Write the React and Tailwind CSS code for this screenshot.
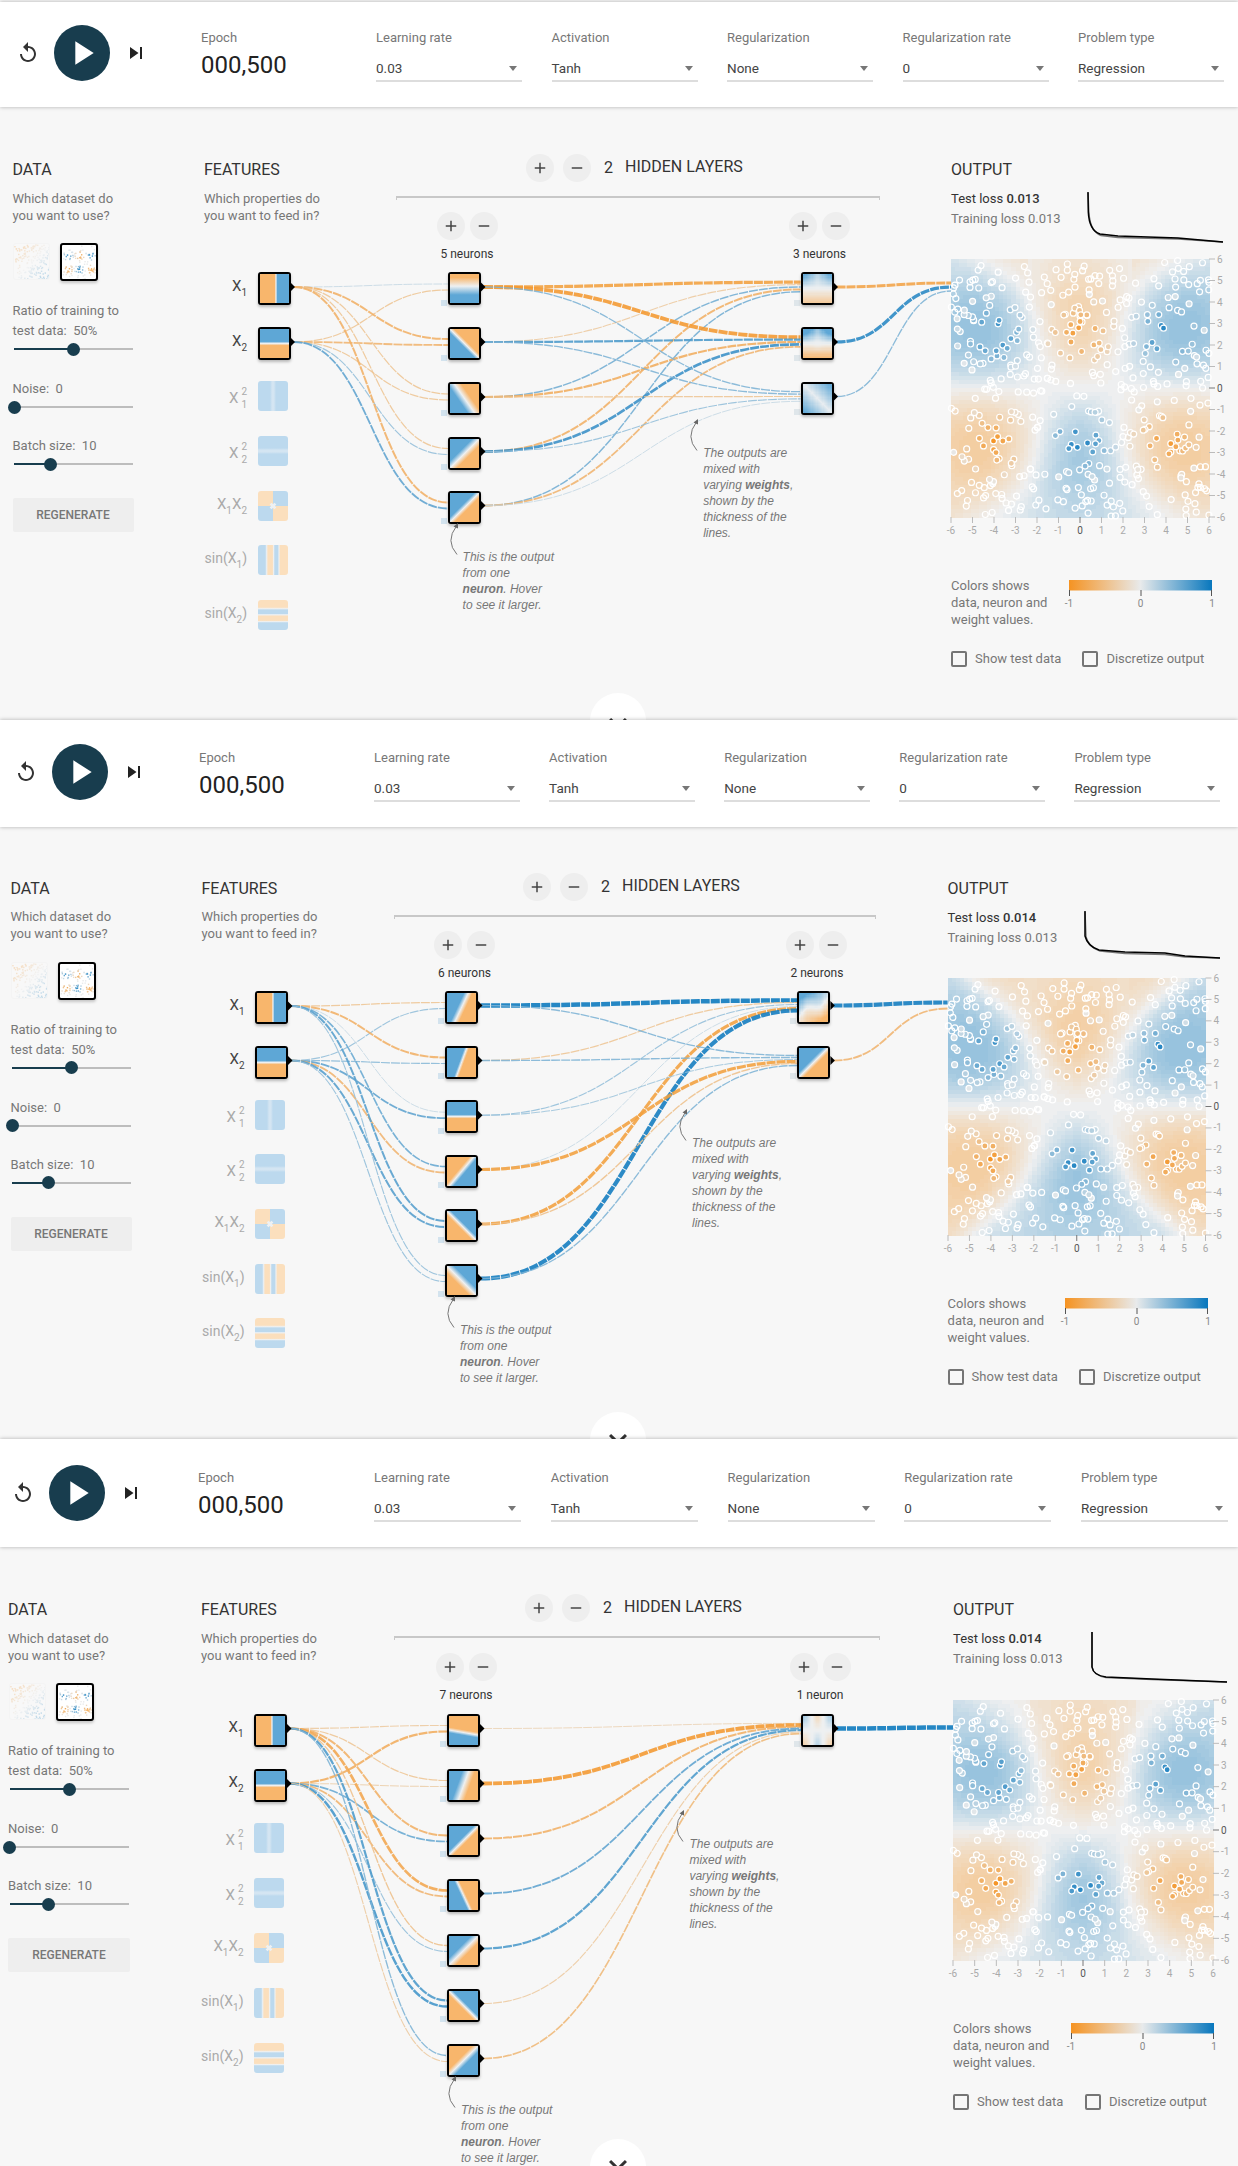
import React from "react";

const ORANGE = [245, 147, 34];
const MIDC = [232, 234, 235];
const BLUE = [8, 119, 189];
const hex = (c) => `rgb(${Math.round(c[0])},${Math.round(c[1])},${Math.round(c[2])})`;
const lerp = (a, b, t) => [a[0] + (b[0] - a[0]) * t, a[1] + (b[1] - a[1]) * t, a[2] + (b[2] - a[2]) * t];
const clamp = (v, a = -1, b = 1) => Math.max(a, Math.min(b, v));
const scaleColor = (v) => (v < 0 ? lerp(MIDC, ORANGE, -v) : lerp(MIDC, BLUE, v));

function rng(seed) {
  let a = seed;
  return () => {
    a |= 0; a = (a + 0x6d2b79f5) | 0;
    let t = Math.imul(a ^ (a >>> 15), 1 | a);
    t = (t + Math.imul(t ^ (t >>> 7), 61 | t)) ^ t;
    return ((t ^ (t >>> 14)) >>> 0) / 4294967296;
  };
}

const GS = [[-4, 2.5, 1], [0, 2.5, -1], [4, 2.5, 1], [-4, -2.5, -1], [0, -2.5, 1], [4, -2.5, -1]];
function labelOf(x, y) {
  let l = 0;
  GS.forEach(([cx, cy, s]) => {
    const d = Math.hypot(x - cx, y - cy);
    const n = s * clamp(1 - d / 2, 0, 1);
    if (Math.abs(n) > Math.abs(l)) l = n;
  });
  return l;
}
const POINTS = (() => {
  const r = rng(17);
  const out = [];
  for (let i = 0; i < 480; i++) {
    const x = r() * 12 - 6;
    const y = r() * 12 - 6;
    out.push([x, y, labelOf(x, y)]);
  }
  return out;
})();

function fieldOf(x, y, p) {
  let sum = 0;
  GS.forEach(([cx, cy, s]) => {
    const d2 = (x - cx) ** 2 + (y - cy) ** 2;
    sum += s * Math.exp(-d2 / (2 * p.sig * p.sig));
  });
  const bow = Math.tanh((y * (Math.abs(x) - p.k * Math.abs(y))) / p.c);
  let v = p.a * sum + p.b * bow;
  if (p.edge) v += p.edge * (Math.abs(x) < 2.5 ? -1 : 1) * Math.max(0, y - 4.2) * 0.5;
  return clamp(v, -0.72, 0.72);
}

function Heatmap({ W, H, p }) {
  const N = 64;
  const cw = W / N;
  const ch = H / N;
  const cells = [];
  for (let j = 0; j < N; j++) {
    for (let i = 0; i < N; i++) {
      const x = -6 + ((i + 0.5) / N) * 12;
      const y = 6 - ((j + 0.5) / N) * 12;
      const v = Math.round(fieldOf(x, y, p) * 20) / 20;
      cells.push(<rect key={i + "-" + j} x={i * cw} y={j * ch} width={cw + 0.5} height={ch + 0.5} fill={hex(scaleColor(v))} />);
    }
  }
  const tk = [-6, -5, -4, -3, -2, -1, 0, 1, 2, 3, 4, 5, 6];
  return (
    <svg width={W + 30} height={H + 24} className="block overflow-visible">
      <g opacity="0.55" shapeRendering="crispEdges">{cells}</g>
      {POINTS.map(([x, y, l], i) => (
        <circle key={i} cx={((x + 6) / 12) * W} cy={((6 - y) / 12) * H} r="3" fill={Math.abs(l) < 0.02 ? "none" : hex(scaleColor(l))} stroke="#fff" strokeWidth="1.2" />
      ))}
      {tk.map((t) => {
        const px = ((t + 6) / 12) * W;
        const py = ((6 - t) / 12) * H;
        const c = t === 0 ? "#777" : "#bbb";
        return (
          <g key={t} fontFamily="Roboto, sans-serif" fontSize="10" fill={t === 0 ? "#555" : "#aaa"}>
            <line x1={px} x2={px} y1={H} y2={H + 6} stroke={c} />
            <text x={px} y={H + 17} textAnchor="middle">{t}</text>
            <line x1={W} x2={W + 6} y1={py} y2={py} stroke={c} />
            <text x={W + 8} y={py + 3.5}>{t}</text>
          </g>
        );
      })}
    </svg>
  );
}

const N_OR = "#f8b66c";
const N_BL = "#5ea7d6";
const N_MID = "#eef0f1";

function LinearHeat({ id, a, w = 6, o = 0 }) {
  const r = (a * Math.PI) / 180;
  const c = Math.cos(r);
  const s = Math.sin(r);
  const L = 0.5 * (Math.abs(c) + Math.abs(s));
  return (
    <svg viewBox="0 0 10 10" className="block w-full h-full" preserveAspectRatio="none">
      <defs>
        <linearGradient id={id} x1={0.5 - c * L} y1={0.5 - s * L} x2={0.5 + c * L} y2={0.5 + s * L}>
          <stop offset={`${50 - w + o}%`} stopColor={N_OR} />
          <stop offset={`${50 + o}%`} stopColor={N_MID} />
          <stop offset={`${50 + w + o}%`} stopColor={N_BL} />
        </linearGradient>
      </defs>
      <rect width="10" height="10" fill={`url(#${id})`} />
    </svg>
  );
}

function FieldHeat({ f }) {
  const N = 24;
  const cells = [];
  for (let j = 0; j < N; j++) {
    for (let i = 0; i < N; i++) {
      const u = ((i + 0.5) / N) * 2 - 1;
      const v = ((j + 0.5) / N) * 2 - 1;
      const val = clamp(f(u, v));
      const col = val < 0 ? lerp([238, 240, 241], [248, 182, 108], -val) : lerp([238, 240, 241], [94, 167, 214], val);
      cells.push(<rect key={i + "-" + j} x={i} y={j} width="1.1" height="1.1" fill={hex(col)} />);
    }
  }
  return (
    <svg viewBox={`0 0 ${N} ${N}`} className="block w-full h-full" shapeRendering="crispEdges">{cells}</svg>
  );
}

function NeuronHeat({ id, spec }) {
  if (spec.f) return <FieldHeat f={spec.f} />;
  return <LinearHeat id={id} a={spec.a} w={spec.w} o={spec.o} />;
}

function DimFeature({ kind, id }) {
  const B = "#bcd9ee";
  const BL = "#d4e5f2";
  const O = "#fbdfbd";
  const W = "#eef1f3";
  const stripe = (stops, vertical) => (
    <svg viewBox="0 0 10 10" className="block w-full h-full" preserveAspectRatio="none">
      <defs>
        <linearGradient id={id} x1="0" y1="0" x2={vertical ? "0" : "1"} y2={vertical ? "1" : "0"}>
          {stops.map(([o, c], i) => <stop key={i} offset={`${o}%`} stopColor={c} />)}
        </linearGradient>
      </defs>
      <rect width="10" height="10" fill={`url(#${id})`} />
    </svg>
  );
  if (kind === "x1") return stripe([[0, B], [40, B], [47, BL], [53, BL], [60, B], [100, B]], false);
  if (kind === "x2") return stripe([[0, B], [40, B], [47, BL], [53, BL], [60, B], [100, B]], true);
  if (kind === "s1") return stripe([[0, B], [24, B], [29, W], [33, O], [48, O], [52, W], [56, B], [66, B], [70, W], [74, O], [100, O]], false);
  if (kind === "s2") return stripe([[0, O], [24, O], [29, W], [33, B], [45, B], [49, W], [54, O], [68, O], [72, W], [76, B], [100, B]], true);
  return (
    <svg viewBox="0 0 10 10" className="block w-full h-full">
      <rect width="5" height="5" fill={O} />
      <rect x="5" width="5" height="5" fill={B} />
      <rect y="5" width="5" height="5" fill={B} />
      <rect x="5" y="5" width="5" height="5" fill={O} />
      <path d="M4.2 4.2 L5.8 5.8 M5.8 4.2 L4.2 5.8" stroke={W} strokeWidth="0.9" />
    </svg>
  );
}

function linkStyle(w) {
  const t = Math.abs(w);
  const base = w > 0 ? BLUE : ORANGE;
  return { stroke: hex(lerp(MIDC, base, Math.pow(t, 0.7))), width: 0.9 + t * t * 3.6 };
}
function Link({ x0, y0, x1, y1, w }) {
  const s = linkStyle(w);
  const xm = (x0 + x1) / 2;
  return <path d={`M${x0} ${y0} C${xm} ${y0} ${xm} ${y1} ${x1} ${y1}`} fill="none" stroke={s.stroke} strokeWidth={s.width} strokeDasharray="9 1" opacity="0.88" />;
}
const inY = (c, i, n) => c - 1.5 + ((i - (n - 1) / 2) / n) * 12;

function Replay() {
  return <svg viewBox="0 0 24 24" className="w-[24px] h-[24px] fill-[#333]"><path d="M12 5V1L7 6l5 5V7c3.31 0 6 2.69 6 6s-2.69 6-6 6-6-2.69-6-6H4c0 4.42 3.58 8 8 8s8-3.58 8-8-3.58-8-8-8z" /></svg>;
}
function Step() {
  return <svg viewBox="0 0 24 24" className="w-[24px] h-[24px] fill-[#222]"><path d="M6 18l8.5-6L6 6v12zM16 6v12h2V6h-2z" /></svg>;
}
function Play() {
  return <svg viewBox="0 0 24 24" className="w-[40px] h-[40px] fill-white"><path d="M8 5v14l11-7z" /></svg>;
}
function RoundBtn({ minus }) {
  return (
    <div className="w-[28px] h-[28px] rounded-full bg-[#eeeeee] flex items-center justify-center shrink-0">
      <svg viewBox="0 0 24 24" className="w-[18px] h-[18px] fill-[#444]">
        <path d={minus ? "M19 13H5v-2h14v2z" : "M19 13h-6v6h-2v-6H5v-2h6V5h2v6h6v2z"} />
      </svg>
    </div>
  );
}
function Select({ label, value, w }) {
  return (
    <div style={{ width: w }} className="shrink-0">
      <div className="text-[13px] leading-[16px] text-[#777]">{label}</div>
      <div className="mt-[13px] h-[23px] border-b-2 border-[#dddddd] flex items-start justify-between text-[13.5px] leading-[18px] text-[#444]">
        <span>{value}</span>
        <span className="mt-[7px] mr-[5px] w-0 h-0 border-x-[4px] border-x-transparent border-t-[5px] border-t-[#777]" />
      </div>
    </div>
  );
}
function Slider({ pct }) {
  return (
    <div className="relative h-[16px] w-[119px] ml-[1.5px] flex items-center">
      <div className="h-[2px] bg-[#183d4e]" style={{ width: pct + "%" }} />
      <div className="h-[2px] bg-[#bdbdbd] flex-1" />
      <div className="absolute w-[13px] h-[13px] rounded-full bg-[#183d4e] top-[1.5px] -ml-[6.5px]" style={{ left: pct + "%" }} />
    </div>
  );
}
function DatasetThumb({ selected, id }) {
  const r = rng(selected ? 5 : 9);
  const dots = [];
  for (let i = 0; i < 170; i++) {
    const x = r() * 12 - 6;
    const y = r() * 12 - 6;
    const l = selected ? labelOf(x, y) : clamp((x - y) / 8) * 0.7;
    if (selected && Math.abs(l) < 0.05 && i % 3) continue;
    dots.push(<rect key={i} x={((x + 6) / 12) * 34} y={((6 - y) / 12) * 34} width="1.4" height="1.4" fill={hex(scaleColor(l))} />);
  }
  return (
    <div className={selected ? "w-[38px] h-[38px] border-2 border-black rounded-[3px] bg-white shadow-[0_2px_3px_rgba(0,0,0,.2)] overflow-hidden" : "w-[37px] h-[37px] rounded-[3px] bg-white/60 opacity-30 border border-[#eeeeee] overflow-hidden"}>
      <svg viewBox="0 0 34 34" className="w-full h-full block" data-id={id}>{dots}</svg>
    </div>
  );
}
function Check({ label, w }) {
  return (
    <div style={{ width: w }} className="flex items-center gap-[8px] shrink-0">
      <div className="w-[16px] h-[16px] border-2 border-[#757575] rounded-[2px]" />
      <span className="text-[13px] leading-[16px] text-[#777]">{label}</span>
    </div>
  );
}
function FeatLabel({ name, dim }) {
  const color = dim ? "text-[#aaaaaa]" : "text-[#444444]";
  const Sub = ({ n }) => <span className="text-[10px] leading-[10px] relative top-[7px]">{n}</span>;
  const size = "text-[15px] leading-[18px]";
  if (name === "x1" || name === "x2") {
    return <span className={`${color} ${size} flex items-center`}>X<Sub n={name[1]} /></span>;
  }
  if (name === "x11" || name === "x22") {
    return (
      <span className={`${color} ${size} flex items-center`}>X
        <span className="flex flex-col text-[10px] leading-[13px] ml-[3px]"><span>2</span><span>{name[1]}</span></span>
      </span>
    );
  }
  if (name === "x12") return <span className={`${color} ${size} flex items-center`}>X<Sub n="1" />X<Sub n="2" /></span>;
  return <span className={`${color} text-[14px] leading-[18px] flex items-center`}>sin(X<Sub n={name[1]} />)</span>;
}
function Note({ x, y, children }) {
  return (
    <>
      <svg className="absolute overflow-visible" style={{ left: x - 22, top: y - 36 }} width="24" height="36">
        <path d="M16 33.5 Q 4 20 15.5 5" fill="none" stroke="#777" strokeWidth="1" />
        <path d="M17 2 L12.5 5.5 L17 7.5 Z" fill="#666" />
      </svg>
      <div className="absolute font-['Liberation_Sans',sans-serif] italic text-[12px] leading-[16px] text-[#777] whitespace-nowrap" style={{ left: x, top: y - 8 }}>
        {children}
      </div>
    </>
  );
}

const li = (a, w = 6, o = 0) => ({ a, w, o });
const sm = (f) => ({ f });

const PANELS = [
  {
    h: 720, headerH: 105, hdrTop: 2, pl: 16, ctlW: 185, epochW: 175, selW: 146, selGap: 29.5, ctlTop: 23, lblTop: 30,
    dataX: 12.5, featX: 204, outX: 951, cy: 170, hlBtn: 168, hlX: 526, hBlock: 396, hBlockW: 484, chevIcon: 12,
    inX: 257.5, inY: [288.5, 343.5], dimY: [381, 436, 491, 545, 600],
    l1x: 448, l1y: [288.5, 343.5, 398.5, 453, 507],
    l2x: 800.5, l2y: [288.5, 343.5, 398],
    btnY: 226, lblY: 254, btnDx: 2.5, l1lbl: "5 neurons", l2lbl: "3 neurons",
    l1h: [li(90, 30, -8), li(135, 7, 0), li(145, 14, 0), li(225, 12, 0), li(225, 8, 0)],
    l2h: [sm((u, v) => (v < 0 ? -v * (0.35 + 0.8 * Math.abs(u)) : -v * 0.65)), sm((u, v) => (v < 0 ? -v * (0.6 + 1.1 * Math.abs(u)) : -v * 0.95) * (1 - 0.6 * Math.exp(-(u * u + v * v) * 9))), sm((u, v) => 0.5 * Math.abs(u - v) + 0.05)],
    w1: [[0.08, -0.55, -0.3, -0.3, -0.55], [-0.3, -0.5, -0.3, 0.25, 0.5]],
    w2: [[-0.8, -0.25, 0.4, -0.55, 0.4], [-0.9, 0.6, -0.6, 0.7, -0.5], [0.35, 0.35, -0.3, 0.25, 0.08]],
    wo: [-0.75, 0.8, 0.35], outCy: 288.5,
    hw: 258, hh: 258, rowH: 79, chartX: 137,
    field: { a: 0.72, b: 0.24, sig: 2.2, k: 0.85, c: 8, edge: -0.1 },
    chart: "M0 0 L0.3 20 C1 35 6 40 12 42 L30 44 L90 46 L135 50", chart2: "M0 1 L0.8 20 C2 36 7 41 13 43.5 L30 45.5 L90 47 L135 50",
    test: "0.013", train: "0.013", legendW: 117.6, chk1: 131.4,
    n1: [462.6, 556.7], n2: [703.2, 452.7],
    slider: [50, 0, 30.6], btnW: 121,
  },
  {
    h: 719, headerH: 106.5, hdrTop: 0, pl: 14, ctlW: 185, epochW: 175, selW: 145.5, selGap: 29.6, ctlTop: 24, lblTop: 29.5,
    dataX: 10.5, featX: 201.5, outX: 947.6, cy: 168.5, hlBtn: 167.6, hlX: 523, hBlock: 394, hBlockW: 482, chevIcon: 9,
    inX: 255, inY: [287.5, 342], dimY: [380, 434, 488.5, 543.6, 597.8],
    l1x: 445, l1y: [287, 342, 396.7, 451, 505.5, 560],
    l2x: 797.4, l2y: [287, 342],
    btnY: 225, lblY: 252.5, btnDx: 3, l1lbl: "6 neurons", l2lbl: "2 neurons",
    l1h: [li(205, 10, 0), li(200, 6, 0), li(270, 7, 0), li(40, 8, 0), li(315, 7, 0), li(315, 12, 0)],
    l2h: [sm((u, v) => -(u * 0.6 + v * 0.85) * 1.05 + 0.25 * Math.sin(u * 3) * (1 - v * v)), li(225, 8, 0)],
    w1: [[-0.3, -0.55, 0.08, 0.45, 0.55, 0.25], [0.25, 0.3, 0.5, -0.5, 0.55, 0.25]],
    w2: [[1, -0.3, 0.25, 0.08, -0.8, 0.95], [0.35, 0.35, 0.2, -0.8, -0.35, 0.35]],
    wo: [0.95, -0.5], outCy: 287,
    hw: 257.5, hh: 257, rowH: 79.5, chartX: 137.4,
    field: { a: 0.5, b: 0.42, sig: 2.1, k: 0.85, c: 6, edge: -0.06 },
    chart: "M0 0 L0 25 C2 33 8 37 14 39 L40 41 L80 42 L100 45 L135 47", chart2: "M0 1 L1 26 C3 34 9 38 15 40 L40 42.5 L80 43.5 L100 46 L135 47",
    test: "0.014", train: "0.013", legendW: 117, chk1: 131.4,
    n1: [460, 609.7], n2: [692, 423],
    slider: [50, 0, 30.6], btnW: 121,
  },
  {
    h: 727, headerH: 108, hdrTop: 0, pl: 11, ctlW: 187, epochW: 176, selW: 147, selGap: 29.75, ctlTop: 26, lblTop: 30.5,
    dataX: 8, featX: 201, outX: 953, cy: 171, hlBtn: 170, hlX: 525, hBlock: 394, hBlockW: 486, chevIcon: 8,
    inX: 254, inY: [291, 346], dimY: [384.4, 439, 494, 549, 604],
    l1x: 447, l1y: [291, 346, 401, 456, 511, 566, 621],
    l2x: 801, l2y: [291],
    btnY: 228, lblY: 256, btnDx: 2.5, l1lbl: "7 neurons", l2lbl: "1 neuron",
    l1h: [li(100, 8, 6), li(200, 16, 0), li(225, 7, 0), li(155, 6, 0), li(225, 12, 0), li(315, 7, 0), li(45, 10, 0)],
    l2h: [sm((u, v) => 0.55 * -v * (1.9 * Math.abs(u) - 0.75))],
    w1: [[-0.25, -0.3, -0.55, -0.7, -0.35, 0.6, 0.35], [-0.6, -0.2, 0.45, -0.5, 0.25, 0.65, -0.25]],
    w2: [[-0.15, -0.9, -0.55, 0.5, 0.6, -0.25, -0.45]],
    wo: [1], outCy: 290,
    hw: 260, hh: 260, rowH: 80, chartX: 139,
    field: { a: 0.7, b: 0.22, sig: 2.05, k: 0.9, c: 8, edge: 0.08 },
    chart: "M0 0 V35 C1 41 5 44 14 45 L60 47 L135 50", chart2: "M0 0 V35 C1 41 5 44 14 45.5 L60 47.5 L135 50",
    test: "0.014", train: "0.013", legendW: 118, chk1: 132,
    n1: [461, 671], n2: [689.4, 404.6],
    slider: [50, 0, 33], btnW: 122,
  },
];

const FEAT = ["x11", "x22", "x12", "s1", "s2"];
const DIMK = ["x1", "x2", "x12", "s1", "s2"];

function Diagram({ p, idx }) {
  const nodeH = 33;
  const links = [];
  const l1n = p.l1y.length;
  p.l1y.forEach((cy, j) => {
    [0, 1].forEach((i) => {
      links.push(<Link key={`a${i}${j}`} x0={p.inX + 36} y0={p.inY[i] - 1.5} x1={p.l1x} y1={inY(cy, i, 2)} w={p.w1[i][j]} />);
    });
  });
  p.l2y.forEach((cy, j) => {
    p.l1y.forEach((c0, i) => {
      links.push(<Link key={`b${i}${j}`} x0={p.l1x + 36} y0={c0 - 1.5} x1={p.l2x} y1={inY(cy, i, l1n)} w={p.w2[j][i]} />);
    });
  });
  p.l2y.forEach((c0, i) => {
    links.push(<Link key={`c${i}`} x0={p.l2x + 36} y0={c0 - 1.5} x1={p.outX} y1={inY(p.outCy, i, p.l2y.length)} w={p.wo[i]} />);
  });
  const tri = (x, cy, k) => <polygon key={k} points={`${x},${cy - 6} ${x + 4.5},${cy - 1.5} ${x},${cy + 3}`} fill="#000" />;
  const Node = ({ x, cy, children }) => (
    <div className="absolute w-[33px] h-[33px] border-2 border-black rounded-[3px] overflow-hidden bg-white shadow-[0_2px_3px_rgba(0,0,0,.25)]" style={{ left: x, top: cy - nodeH / 2 }}>
      {children}
    </div>
  );
  const layerCtl = (x, lbl, key) => (
    <React.Fragment key={key}>
      <div className="absolute flex gap-[5px]" style={{ left: x + p.btnDx - 14, top: p.btnY - 14 }}>
        <RoundBtn />
        <RoundBtn minus />
      </div>
      <div className="absolute w-[80px] text-center text-[12px] leading-[14px] text-[#333]" style={{ left: x + p.btnDx + 16.5 - 40, top: p.lblY - 7 }}>{lbl}</div>
    </React.Fragment>
  );
  return (
    <div className="absolute inset-0 pointer-events-none">
      <svg className="absolute left-0 top-0" width="1238" height={p.h}>
        {links}
        {[...p.inY.map((c, i) => tri(p.inX + 33, c, "i" + i)), ...p.l1y.map((c, i) => tri(p.l1x + 33, c, "j" + i)), ...p.l2y.map((c, i) => tri(p.l2x + 33, c, "k" + i))]}
      </svg>
      <Node x={p.inX} cy={p.inY[0]}><LinearHeat id={`p${idx}x1`} a={0} w={5} o={5} /></Node>
      <Node x={p.inX} cy={p.inY[1]}><LinearHeat id={`p${idx}x2`} a={270} w={7} o={0} /></Node>
      {p.inY.map((c, i) => (
        <div key={i} className="absolute w-[60px] flex justify-end" style={{ left: p.inX - 70.5, top: c - 12 }}>
          <FeatLabel name={i ? "x2" : "x1"} />
        </div>
      ))}
      {p.dimY.map((t, i) => (
        <React.Fragment key={i}>
          <div className="absolute w-[30px] h-[30px] rounded-[3px] overflow-hidden" style={{ left: p.inX, top: t }}>
            <DimFeature kind={DIMK[i]} id={`p${idx}d${i}`} />
          </div>
          <div className="absolute w-[60px] flex justify-end" style={{ left: p.inX - 70.5, top: t + 4 }}>
            <FeatLabel name={FEAT[i]} dim />
          </div>
        </React.Fragment>
      ))}
      {p.l1y.map((c, i) => (
        <React.Fragment key={i}>
          <div className="absolute w-[6px] h-[6px] bg-[#d3e3ee]" style={{ left: p.l1x - 7, top: c + 11 }} />
          <Node x={p.l1x} cy={c}><NeuronHeat id={`p${idx}a${i}`} spec={p.l1h[i]} /></Node>
        </React.Fragment>
      ))}
      {p.l2y.map((c, i) => (
        <React.Fragment key={i}>
          <div className="absolute w-[6px] h-[6px] bg-[#dfe6ea]" style={{ left: p.l2x - 7, top: c + 11 }} />
          <Node x={p.l2x} cy={c}><NeuronHeat id={`p${idx}b${i}`} spec={p.l2h[i]} /></Node>
        </React.Fragment>
      ))}
      {layerCtl(p.l1x, p.l1lbl, "l1")}
      {layerCtl(p.l2x, p.l2lbl, "l2")}
      <Note x={p.n1[0]} y={p.n1[1]}>
        This is the output<br />from one<br /><b className="font-bold">neuron</b>. Hover<br />to see it larger.
      </Note>
      <Note x={p.n2[0]} y={p.n2[1]}>
        The outputs are<br />mixed with<br />varying <b className="font-bold">weights</b>,<br />shown by the<br />thickness of the<br />lines.
      </Note>
    </div>
  );
}

function Panel({ p, idx }) {
  const top = p.cy - 10 - p.headerH - p.hdrTop;
  return (
    <section className="relative bg-[#f7f7f7] font-['Roboto',sans-serif]" style={{ height: p.h, paddingTop: p.hdrTop }}>
      <div className="relative z-10 bg-white shadow-[0_0_4px_rgba(0,0,0,.3)] flex items-start" style={{ height: p.headerH, paddingLeft: p.pl }}>
        <div className="flex items-center shrink-0" style={{ width: p.ctlW, marginTop: p.ctlTop }}>
          <Replay />
          <div className="ml-[14px] w-[56px] h-[56px] rounded-full bg-[#183d4e] flex items-center justify-center"><Play /></div>
          <div className="ml-[13.5px]"><Step /></div>
        </div>
        <div className="shrink-0" style={{ width: p.epochW, marginTop: p.lblTop - p.hdrTop }}>
          <div className="text-[13px] leading-[16px] text-[#777]">Epoch</div>
          <div className="text-[24px] leading-[28px] text-[#222] mt-[5px]">000,500</div>
        </div>
        <div className="flex" style={{ gap: p.selGap, marginTop: p.lblTop - p.hdrTop }}>
          <Select w={p.selW} label="Learning rate" value="0.03" />
          <Select w={p.selW} label="Activation" value="Tanh" />
          <Select w={p.selW} label="Regularization" value="None" />
          <Select w={p.selW} label="Regularization rate" value="0" />
          <Select w={p.selW} label="Problem type" value="Regression" />
        </div>
      </div>

      <div className="relative flex items-start" style={{ paddingLeft: p.dataX, paddingTop: top }}>
        <div className="shrink-0" style={{ width: p.featX - p.dataX }}>
          <h4 className="text-[16px] leading-[20px] font-normal text-[#333]">DATA</h4>
          <p className="mt-[9.5px] text-[13px] leading-[17px] text-[#777]">Which dataset do<br />you want to use?</p>
          <div className="mt-[19.5px] flex items-start gap-[10px] ml-[0.5px]">
            <DatasetThumb id="a" />
            <DatasetThumb selected id="b" />
          </div>
          <p className="mt-[20px] text-[13px] leading-[20px] text-[#777]">Ratio of training to<br />test data:&nbsp; 50%</p>
          <Slider pct={p.slider[0]} />
          <p className="mt-[22px] text-[13px] leading-[20px] text-[#777]">Noise:&nbsp; 0</p>
          <Slider pct={p.slider[1]} />
          <p className="mt-[21px] text-[13px] leading-[20px] text-[#777]">Batch size:&nbsp; 10</p>
          <Slider pct={p.slider[2]} />
          <div className="mt-[26px] h-[34px] rounded-[2px] bg-[#eeeeee] flex items-center justify-center text-[12px] font-medium text-[#777]" style={{ width: p.btnW }}>REGENERATE</div>
        </div>

        <div className="shrink-0 flex items-start" style={{ width: p.outX - p.featX }}>
          <div className="shrink-0" style={{ width: p.hBlock - p.featX }}>
            <h4 className="text-[16px] leading-[20px] font-normal text-[#333]">FEATURES</h4>
            <p className="mt-[9.5px] text-[13px] leading-[17px] text-[#777]">Which properties do<br />you want to feed in?</p>
          </div>
          <div className="shrink-0" style={{ width: p.hBlockW }}>
            <div className="flex items-center -mt-[6px] h-[28px]" style={{ paddingLeft: p.hlX - p.hBlock }}>
              <RoundBtn />
              <div className="ml-[9px]"><RoundBtn minus /></div>
              <span className="ml-[13px] text-[16px] text-[#333]">2</span>
              <span className="ml-[12px] text-[16px] text-[#333] relative top-[-1px]">HIDDEN LAYERS</span>
            </div>
            <div className="mt-[14px] h-[4px] border-t-2 border-x border-[#c8c8c8]" />
          </div>
        </div>

        <div className="shrink-0" style={{ width: p.hw + 25 }}>
          <h4 className="text-[16px] leading-[20px] font-normal text-[#333]">OUTPUT</h4>
          <div className="flex items-start" style={{ height: p.rowH }}>
            <div className="pt-[9px] shrink-0 text-[13px] leading-[20px]" style={{ width: p.chartX }}>
              <div className="text-[#333]">Test loss <span className="font-medium">{p.test}</span></div>
              <div className="text-[#777]">Training loss {p.train}</div>
            </div>
            <svg width="135" height="52" className="mt-[12px] overflow-visible shrink-0">
              <path d={p.chart2} fill="none" stroke="#777" strokeWidth="1.5" />
              <path d={p.chart} fill="none" stroke="#000" strokeWidth="1.5" />
            </svg>
          </div>
          <Heatmap W={p.hw} H={p.hh} p={p.field} />
          <div className="mt-[36px] flex items-start">
            <p className="shrink-0 text-[13px] leading-[17px] text-[#777]" style={{ width: p.legendW }}>Colors shows<br />data, neuron and<br />weight values.</p>
            <svg width="143" height="36" className="mt-[3px] overflow-visible">
              <defs>
                <linearGradient id={`leg${idx}`}>
                  <stop offset="0" stopColor="#f59322" />
                  <stop offset="0.5" stopColor="#e8eaeb" />
                  <stop offset="1" stopColor="#0877bd" />
                </linearGradient>
              </defs>
              <rect x="0" y="0" width="143" height="10.5" fill={`url(#leg${idx})`} />
              {[0, 71.5, 143].map((x, i) => (
                <g key={x} fontFamily="Roboto, sans-serif" fontSize="10" fill="#888">
                  <line x1={x + (i === 2 ? -0.5 : 0.5)} x2={x + (i === 2 ? -0.5 : 0.5)} y1="10" y2="16" stroke="#555" />
                  <text x={x} y="27" textAnchor="middle">{["-1", "0", "1"][i]}</text>
                </g>
              ))}
            </svg>
          </div>
          <div className="mt-[22.5px] flex">
            <Check label="Show test data" w={p.chk1} />
            <Check label="Discretize output" />
          </div>
        </div>
      </div>

      <Diagram p={p} idx={idx} />

      <div className="absolute left-0 right-0 bottom-0 overflow-hidden h-[27px] z-0">
        <div className="absolute left-[590px] top-0 w-[56px] h-[56px] rounded-full bg-white flex justify-center">
          <svg viewBox="0 0 24 24" className="w-[36px] h-[36px] fill-[#333]" style={{ marginTop: p.chevIcon }}>
            <path d="M16.59 8.59L12 13.17 7.41 8.59 6 10l6 6 6-6z" />
          </svg>
        </div>
      </div>
    </section>
  );
}

export default function App() {
  return (
    <div className="w-[1238px] overflow-hidden bg-[#f7f7f7]">
      {PANELS.map((p, i) => <Panel key={i} p={p} idx={i} />)}
    </div>
  );
}
